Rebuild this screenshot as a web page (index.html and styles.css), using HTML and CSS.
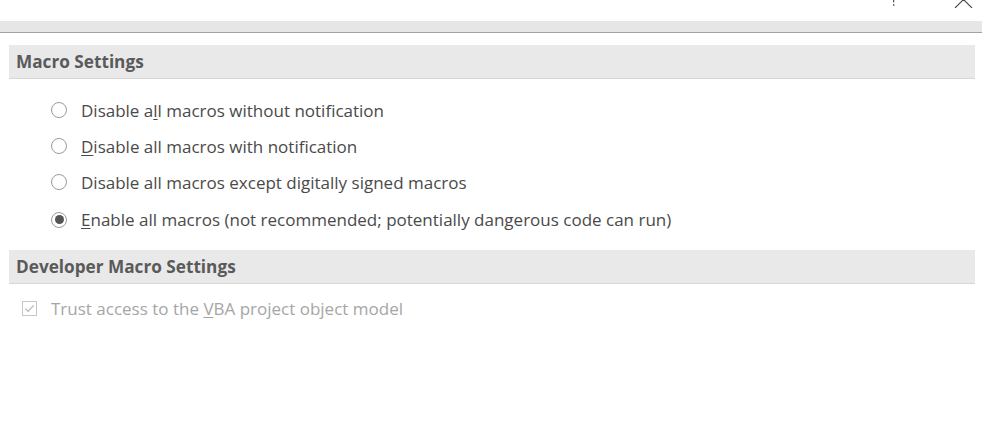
FILE: index.html
```html
<!DOCTYPE html>
<html>
<head>
<meta charset="utf-8">
<link rel="stylesheet" href="styles.css">
</head>
<body>
<div class="titlebar">
  <svg class="help" width="4" height="7" viewBox="0 0 4 7"><rect x="1" y="0" width="1.2" height="2.4" fill="#555"/><rect x="1" y="4.2" width="1.4" height="1.6" fill="#555"/></svg>
  <svg class="close" width="19" height="9" viewBox="0 0 19 9"><path d="M1 9 L9.5 0.5 L18 9" fill="none" stroke="#444" stroke-width="1.1"/></svg>
</div>
<div class="band"></div>
<div class="content">
  <div class="section-head">Macro Settings</div>
  <div class="options">
    <label class="option"><span class="radio"></span><span>Disable a<u>l</u>l macros without notification</span></label>
    <label class="option"><span class="radio"></span><span><u>D</u>isable all macros with notification</span></label>
    <label class="option"><span class="radio"></span><span>Disable all macros except di<u>g</u>itally signed macros</span></label>
    <label class="option"><span class="radio checked"></span><span><u>E</u>nable all macros (not recommended; potentially dangerous code can run)</span></label>
  </div>
  <div class="section-head">Developer Macro Settings</div>
  <label class="check-row disabled"><span class="checkbox"><svg width="13" height="13" viewBox="0 0 13 13"><path d="M2.5 6.8 L5.2 9.4 L10.6 3.4" fill="none" stroke="#b9b9b9" stroke-width="1.3"/></svg></span><span>Trust access to the <u>V</u>BA project object model</span></label>
</div>
</body>
</html>
```
FILE: styles.css
```css
html, body {
  margin: 0;
  padding: 0;
  background: #fff;
}
body {
  font-family: "Open Sans", "Noto Sans", sans-serif;
  color: #444;
  width: 982px;
  height: 436px;
  overflow: hidden;
}
.titlebar {
  height: 21px;
  display: flex;
  align-items: flex-start;
  justify-content: flex-end;
  padding-right: 9px;
  box-sizing: border-box;
}
.help {
  margin-right: 58px;
  margin-top: 0;
}
.close {
  margin-top: -1px;
}
.band {
  height: 11px;
  background: #e6e6e6;
  border-bottom: 1px solid #a3a3a3;
}
.content {
  padding: 12px 7px 0 9px;
}
.section-head {
  height: 33px;
  background: #e9e9e9;
  border-bottom: 1px solid #d6d6d6;
  padding-left: 7px;
  font-weight: 700;
  font-size: 17.2px;
  color: #5a5a5a;
  display: flex;
  align-items: center;
}
.options {
  padding: 13px 0 12px 42px;
  display: flex;
  flex-direction: column;
}
.option {
  height: 36px;
  display: flex;
  align-items: center;
  font-size: 17px;
  color: #4a4a4a;
}
.option:last-child {
  height: 37px;
  padding-top: 1px;
}
.option u, .check-row u {
  text-decoration-thickness: 1px;
  text-underline-offset: 2px;
}
.radio {
  width: 16px;
  height: 16px;
  border: 1px solid #9a9a9a;
  border-radius: 50%;
  box-sizing: border-box;
  margin-right: 14px;
  flex: none;
  display: flex;
  align-items: center;
  justify-content: center;
}
.radio.checked::after {
  content: "";
  width: 9px;
  height: 9px;
  border-radius: 50%;
  background: #555;
}
.check-row {
  display: flex;
  align-items: center;
  height: 49px;
  padding-left: 13px;
  font-size: 17px;
}
.check-row.disabled {
  color: #a6a6a6;
}
.checkbox {
  width: 15px;
  height: 15px;
  border: 1px solid #c6c6c6;
  box-sizing: border-box;
  margin-right: 14px;
  display: flex;
  align-items: center;
  justify-content: center;
  flex: none;
}
.checkbox svg {
  display: block;
}
```
